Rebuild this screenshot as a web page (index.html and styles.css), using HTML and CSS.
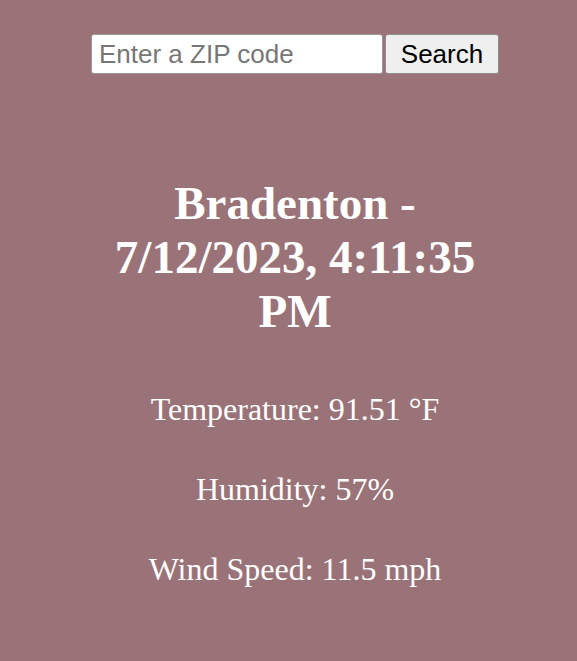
FILE: index.html
```html
<!DOCTYPE html>
<html>
<head>
<meta charset="utf-8">
<link rel="stylesheet" href="styles.css">
</head>
<body>
<div class="page">
  <form class="search">
    <input class="zip" type="text" placeholder="Enter a ZIP code">
    <button class="btn" type="button">Search</button>
  </form>
  <h1 class="title">Bradenton -<br>7/12/2023, 4:11:35<br>PM</h1>
  <div class="info">
    <p class="row">Temperature: 91.51 °F</p>
    <p class="row">Humidity: 57%</p>
    <p class="row">Wind Speed: 11.5 mph</p>
  </div>
</div>
</body>
</html>
```
FILE: styles.css
```css
html, body {
  margin: 0;
  padding: 0;
  background: #9a7378;
}
.page {
  padding: 34px 0 0 13px;
  display: flex;
  flex-direction: column;
  align-items: center;
  font-family: "Liberation Serif", "Times New Roman", serif;
  color: #ffffff;
}
.search {
  display: flex;
  gap: 2px;
  margin: 0;
}
.zip {
  box-sizing: border-box;
  width: 292px;
  height: 40px;
  margin: 0;
  padding: 0 7px;
  border: 1px solid #9a9a9a;
  border-radius: 3px;
  background: #ffffff;
  font-family: "Liberation Sans", Arial, sans-serif;
  font-size: 26px;
  color: #000;
  outline: none;
}
.zip::placeholder {
  color: #777777;
}
.btn {
  box-sizing: border-box;
  width: 114px;
  height: 40px;
  margin: 0;
  padding: 0;
  border: 1px solid #8e8e8e;
  border-radius: 3px;
  background: #efefef;
  font-family: "Liberation Sans", Arial, sans-serif;
  font-size: 26px;
  color: #000;
}
.title {
  margin: 102px 0 0 0;
  font-size: 47px;
  line-height: 54px;
  font-weight: bold;
  text-align: center;
}
.info {
  margin-top: 53px;
  display: flex;
  flex-direction: column;
  align-items: center;
  gap: 43px;
}
.row {
  margin: 0;
  font-size: 32px;
  line-height: 37px;
  text-align: center;
}
```
